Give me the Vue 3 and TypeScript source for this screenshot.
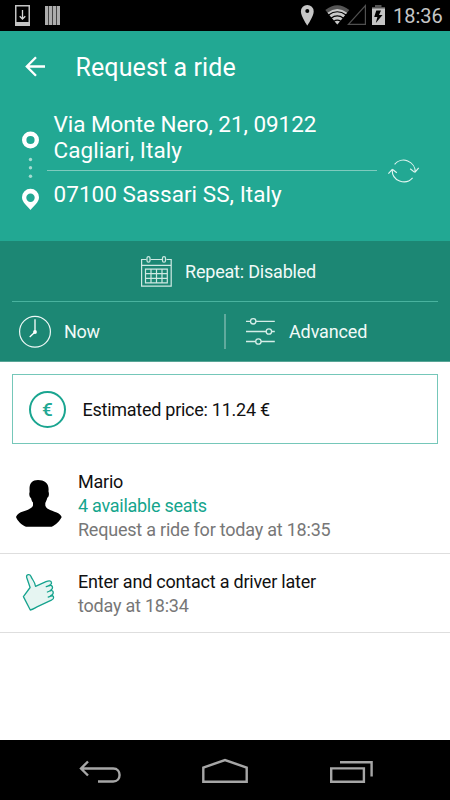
<script setup lang="ts">
interface Ride {
  id: string
  title: string
  seats?: string
  time: string
}

const rides: Ride[] = [
  { id: 'mario', title: 'Mario', seats: '4 available seats', time: 'Request a ride for today at 18:35' },
  { id: 'later', title: 'Enter and contact a driver later', time: 'today at 18:34' },
]
const stripes: number[] = [45, 49, 53, 57]
</script>

<template>
  <div class="screen">
    <div class="status">
      <svg class="status-left" viewBox="0 0 70 31">
        <path fill="#c4c4c4" fill-rule="evenodd" d="M15 5h15v21H15zM16.500 6.500v15.500h12v-15.500z" />
        <path d="M22.500 10v8M19.700 16.200l2.800 2.800 2.800-2.800" fill="none" stroke="#d8d8d8" stroke-width="1.300" />
        <rect v-for="x in stripes" :key="x" :x="x" y="6" width="3" height="19" fill="#bdbdbd" />
        <path d="M45 6h15v19H45z" fill="#999" opacity=".45" />
      </svg>
      <div class="status-right">
        <svg class="status-icons" viewBox="298 0 90 31">
          <path fill="#c6c6c6" fill-rule="evenodd" d="M307.300 5a6.400 6.400 0 0 0-6.400 6.400c0 4.700 6.400 14.100 6.400 14.100s6.400-9.400 6.400-14.100A6.400 6.400 0 0 0 307.300 5zm0 4a2 2 0 1 1 0 4 2 2 0 0 1 0-4z" />
          <path d="M337.300 24.500L325.300 10q12-9.400 24 0z" fill="#555" />
          <path d="M337.300 24.500l-9.800-11.800q9.800-7.400 19.600 0z" fill="#c9c9c9" />
          <path d="M328.500 15q8.800-6.400 17.600 0M331 18.200q6.300-4.600 12.600 0M333.800 21.300q3.500-2.300 7 0" fill="none" stroke="#000" stroke-width="1.100" />
          <path d="M365.400 5.500v18.900h-17z" fill="none" stroke="#505050" stroke-width="1.200" />
          <path fill="#555" d="M375 5h6.500v2h3.500v2h-13V7h3z" />
          <path fill="#c4c4c4" d="M372 8.500h13V25h-13z" />
          <path fill="#000" d="M376.300 10.500h4.700l-2 4.500h3.500l-6.700 8 1.600-6h-3.200z" />
        </svg>
        <span class="clock">18:36</span>
      </div>
    </div>

    <header class="top">
      <div class="titlebar">
        <svg class="back" viewBox="24 56 22 22">
          <path d="M45 66.500H27M36 57.300l-9.200 9.200 9.200 9.200" fill="none" stroke="#fff" stroke-width="2.300" />
        </svg>
        <h1><span>Request a ride</span></h1>
      </div>

      <div class="route">
        <svg class="route-marks" viewBox="20 128 22 84">
          <circle cx="30.500" cy="140" r="6.300" fill="none" stroke="#fff" stroke-width="4.400" />
          <g fill="#a5dbd0">
            <circle cx="30.500" cy="159.500" r="1.700" /><circle cx="30.500" cy="167.800" r="1.700" /><circle cx="30.500" cy="176.200" r="1.700" />
          </g>
          <path fill="#fff" fill-rule="evenodd" d="M30.500 188.800a8.500 8.500 0 0 0-8.500 8.500c0 5.200 5.300 8.700 8.500 12.600 3.200-3.900 8.500-7.400 8.500-12.600a8.500 8.500 0 0 0-8.500-8.500zm0 4.700a4.200 4.200 0 1 1 0 8.400 4.200 4.200 0 0 1 0-8.400z" />
        </svg>
        <div class="places">
          <div class="place from"><span class="street">Via Monte Nero, 21, 09122</span><br><span class="city">Cagliari, Italy</span></div>
          <div class="place to"><span class="city">07100 Sassari SS, Italy</span></div>
        </div>
        <svg class="swap" viewBox="387 156 34 30">
          <g fill="none" stroke="#e2f5f1" stroke-width="1.150">
            <path d="M394.600 164.300a11.700 11.700 0 0 1 20.600 8M414.700 172.400l-4.500-3.600M414.900 172.400l3.800-4.600" />
            <path d="M412.600 177.900a11.700 11.700 0 0 1-20.400-8M392.300 169.300l-3.900 4.400M392.300 169.300l4.500 3.500" />
          </g>
        </svg>
      </div>
    </header>

    <section class="options">
      <div class="repeat">
        <svg class="calendar" viewBox="140 255 33 33">
          <g fill="none" stroke="#cfe9e3" stroke-width="1.200">
            <path d="M146.500 259.500h-4.900v26.700h29.600v-26.700h-4.700M150.500 259.500h12M141.600 265.300h29.600" />
            <rect x="147" y="256.600" width="3" height="5.600" rx="1.500" /><rect x="162.500" y="256.600" width="3" height="5.600" rx="1.500" />
            <path d="M145.500 269.200h21.800v13.600h-21.800zM151 269v14M156.500 269v14M162 269v14M145.500 273.700h22M145.500 278.300h22" />
          </g>
        </svg>
        <span class="label repeat-label">Repeat: Disabled</span>
      </div>
      <div class="tabs">
        <div class="tab">
          <svg class="time" viewBox="18 315 34 34">
            <circle cx="35" cy="331.800" r="15.400" fill="none" stroke="#eef8f6" stroke-width="1.200" />
            <path d="M35 332v-12.800M35 332l-5.300 5" fill="none" stroke="#fff" stroke-width="1.300" />
            <circle cx="35" cy="332" r="1.900" fill="#fff" />
          </svg>
          <span class="label now-label">Now</span>
        </div>
        <div class="tab advanced">
          <svg class="sliders" viewBox="245 316 31 31">
            <g fill="none" stroke="#d6ede8" stroke-width="1.300">
              <path d="M246 321.300h4.500M255.800 321.300h19M246 331.500h20.200M271.500 331.500h3.300M246 341.500h9.700M261 341.500h13.800" />
              <circle cx="253.200" cy="321.300" r="2.700" /><circle cx="268.900" cy="331.500" r="2.700" /><circle cx="258.400" cy="341.500" r="2.700" />
            </g>
          </svg>
          <span class="label advanced-label">Advanced</span>
        </div>
      </div>
    </section>

    <main>
      <div class="price">
        <div class="euro"><span>€</span></div>
        <span class="price-label">Estimated price: 11.24 €</span>
      </div>
      <div v-for="ride in rides" :key="ride.id" :class="['ride', ride.id]">
        <svg v-if="ride.id === 'mario'" class="person" viewBox="14 478 50 50">
          <path d="M29.500 489c0-6 3-9 8.500-9 6 0 10.600 2.700 10.600 9.200l-.1 2.300c1 2.500.2 5.500-1.200 6.300-.6 2.500-1.400 4-2 5.200v2.500c1 3.500 4.700 4.500 9.200 6.200 3 1 5.800 2 7.200 5.300-2 4-6 8-10 9.800H26c-4.500-1.800-8.500-6-10-9.800 1-3 4-4.500 7-5.500 4.500-1.500 9-3 10-6v-3c-1-1-1.700-2.700-2-4.500-1.500-1-2.200-4-1.400-6z" />
        </svg>
        <svg v-else class="thumb" viewBox="20 571 37 42">
          <path d="M30.300 610l-6.900-13.400 6.700-9.100-3.500-10.300c-.4-3 3.200-3.500 4.300-1 1.200 3.700 4.200 5.300 4.600 10.100l10.500-4.600c2.200-.9 4.900-1.300 5.400.5.500 1.600-.6 2.600-2.400 3.300 2-.5 3.300.2 3.500 1.700.2 1.600-.7 2.600-2.300 3.300 1.800-.4 2.900.3 3 1.800.2 1.700-.8 2.600-2.400 3.300 1.600-.3 2.600.4 2.800 1.800.2 1.500-.8 2.200-2.200 2.800l-13.900 6.500c-2.500 1.200-4.500 2.800-7.200 3.300z" fill="#e6f5f2" stroke="#16a38e" stroke-width="1.300" stroke-linejoin="round" />
          <path d="M50 585.400l-3.700 1.300M51.200 590.500l-3.800 1.500M51.900 595.600l-3.700 1.500" fill="none" stroke="#16a38e" stroke-width="1.300" stroke-linecap="round" />
        </svg>
        <div class="details">
          <div><span class="title">{{ ride.title }}</span></div>
          <div v-if="ride.seats" class="seats"><span class="seat-text">{{ ride.seats }}</span></div>
          <div class="when"><span class="when-text">{{ ride.time }}</span></div>
        </div>
      </div>
    </main>

    <nav class="navbar">
      <svg viewBox="0 740 450 60">
        <g fill="none" stroke="#a6a6a6" stroke-width="2.400">
          <path d="M81 768.500h32.200c8.500 0 8.500 13 0 13H98M88 761.500l-7 7 7 7" />
          <path d="M203.300 781.700v-14.200l21.700-7.400 21.700 7.400v14.200z" />
          <path d="M331.200 768.400h32.700v13.300h-32.700zM340 762.300h31.600V776.500" />
        </g>
      </svg>
    </nav>
  </div>
</template>

<style>
body {
  margin: 0;
}
</style>

<style scoped>
.screen {
  width: 450px;
  height: 800px;
  display: flex;
  flex-direction: column;
  overflow: hidden;
  background: #fff;
  font-family: Roboto, "Liberation Sans", sans-serif;
  font-size: 18px;
  color: #111;
}
svg {
  display: block;
  flex: none;
}
span {
  white-space: nowrap;
}
.status {
  height: 31px;
  flex: none;
  display: flex;
  justify-content: space-between;
  background: #000;
}
.status-left {
  width: 70px;
  height: 31px;
}
.status-right {
  width: 152px;
  display: flex;
}
.status-icons {
  width: 90px;
  height: 31px;
}
.clock {
  padding-left: 5px;
  font-size: 20px;
  line-height: 32px;
  color: #c6c6c6;
}
.top {
  height: 210px;
  flex: none;
  background: #22a893;
  color: #fff;
}
.titlebar {
  height: 72px;
  display: flex;
  align-items: center;
  padding-left: 24px;
}
.back {
  width: 22px;
  height: 22px;
}
h1 {
  margin: 1px 0 0 29.500px;
  font-size: 25px;
  font-weight: 400;
  letter-spacing: 0.1px;
}
.route {
  display: flex;
}
.route-marks {
  width: 22px;
  height: 84px;
  margin: 25px 0 0 20px;
}
.places {
  width: 330px;
  margin-left: 5px;
  padding-top: 8px;
  font-size: 22.500px;
  line-height: 26px;
}
.place {
  padding-left: 6.500px;
}
.street {
  letter-spacing: -0.050px;
}
.city {
  letter-spacing: 0.050px;
}
.from {
  height: 59px;
  border-bottom: 1px solid #7ecbbe;
}
.to {
  padding-top: 10px;
}
.swap {
  width: 34px;
  height: 30px;
  margin: 53px 0 0 10px;
}
.options {
  height: 121px;
  flex: none;
  box-sizing: border-box;
  padding: 0 12px;
  background: #1c8774;
  border-bottom: 1px solid #58a596;
  color: #f1faf8;
}
.repeat {
  height: 60px;
  display: flex;
  align-items: center;
  padding-left: 128px;
  border-bottom: 1px solid #49b39f;
}
.calendar {
  width: 33px;
  height: 33px;
}
.repeat-label {
  margin-left: 12px;
  letter-spacing: -0.200px;
}
.tabs {
  height: 59px;
  display: flex;
  align-items: center;
}
.tab {
  width: 212px;
  height: 35px;
  display: flex;
  align-items: center;
  padding-left: 6px;
  box-sizing: border-box;
}
.tab.advanced {
  border-left: 2px solid #60aa9d;
  padding-left: 19px;
}
.time {
  width: 34px;
  height: 34px;
}
.now-label {
  margin-left: 12px;
  letter-spacing: -0.300px;
}
.sliders {
  width: 31px;
  height: 31px;
}
.advanced-label {
  margin-left: 13px;
  letter-spacing: -0.130px;
}
main {
  flex: 1;
  padding-top: 12px;
}
.price {
  height: 70px;
  box-sizing: border-box;
  display: flex;
  align-items: center;
  margin: 0 12px;
  padding-left: 16px;
  border: 1px solid #75c7b9;
}
.euro {
  width: 37px;
  height: 37px;
  box-sizing: border-box;
  display: flex;
  align-items: center;
  justify-content: center;
  border: 2px solid #1aa590;
  border-radius: 50%;
  color: #22a893;
  font-size: 19px;
  font-weight: 500;
}
.price-label {
  margin-left: 16.500px;
  letter-spacing: -0.260px;
}
.ride {
  box-sizing: border-box;
  display: flex;
  border-bottom: 1px solid #dedede;
}
.mario {
  height: 110px;
  padding-left: 14px;
}
.person {
  width: 50px;
  height: 50px;
  margin-top: 34px;
}
.mario .details {
  padding-top: 26px;
  margin-left: 14px;
}
.later {
  height: 79px;
  padding-left: 20px;
}
.thumb {
  width: 37px;
  height: 42px;
  margin-top: 17px;
}
.later .details {
  padding-top: 16px;
  margin-left: 21px;
}
.details {
  line-height: 24px;
  letter-spacing: -0.220px;
}
.seats {
  color: #14a58d;
  letter-spacing: -0.270px;
}
.when {
  color: #777;
}
.navbar {
  height: 60px;
  flex: none;
  background: #000;
}
.navbar svg {
  width: 450px;
  height: 60px;
}
</style>
